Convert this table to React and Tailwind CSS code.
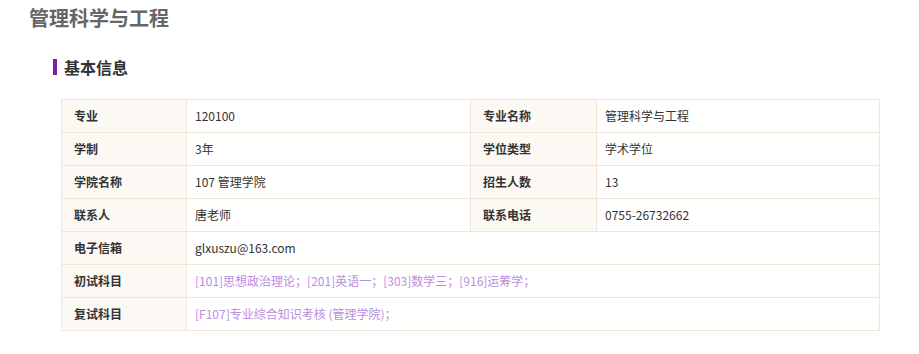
export default function App() {
  const font = { fontFamily: '"Noto Sans CJK SC", "Noto Sans", sans-serif' };
  const label = "border border-[#f3e5d6] bg-[#fcf9f5] pl-3 pr-2 h-[33px] text-[12px] font-bold text-[#333] align-middle";
  const value = "border border-[#f3e5d6] bg-white pl-2 pr-2 h-[33px] text-[12px] text-[#333] align-middle";
  const link = "text-[#bb8ddf]";
  return (
    <div className="w-[919px] h-[354px] bg-white overflow-hidden" style={font}>
      <div className="pl-[29px] pt-[4px] h-[28px] text-[20px] leading-[28px] font-bold text-[#666]">管理科学与工程</div>
      <div className="mt-[31px] ml-[53px] flex items-center h-[16px]">
        <div className="w-[4px] h-[16px] bg-[#7b1fa2]"></div>
        <div className="ml-[7px] text-[16px] leading-[16px] font-bold text-[#333]">基本信息</div>
      </div>
      <table className="ml-[61px] mt-[24px] border-collapse w-[818px] table-fixed">
        <colgroup>
          <col className="w-[125px]" />
          <col className="w-[284px]" />
          <col className="w-[126px]" />
          <col className="w-[283px]" />
        </colgroup>
        <tbody>
          <tr>
            <td className={label}>专业</td>
            <td className={value}>120100</td>
            <td className={label}>专业名称</td>
            <td className={value}>管理科学与工程</td>
          </tr>
          <tr>
            <td className={label}>学制</td>
            <td className={value}>3年</td>
            <td className={label}>学位类型</td>
            <td className={value}>学术学位</td>
          </tr>
          <tr>
            <td className={label}>学院名称</td>
            <td className={value}>107 管理学院</td>
            <td className={label}>招生人数</td>
            <td className={value}>13</td>
          </tr>
          <tr>
            <td className={label}>联系人</td>
            <td className={value}>唐老师</td>
            <td className={label}>联系电话</td>
            <td className={value}>0755-26732662</td>
          </tr>
          <tr>
            <td className={label}>电子信箱</td>
            <td className={value} colSpan={3}>glxuszu@163.com</td>
          </tr>
          <tr>
            <td className={label}>初试科目</td>
            <td className={value} colSpan={3}>
              <span className={link}>[101]思想政治理论；[201]英语一；[303]数学三；[916]运筹学；</span>
            </td>
          </tr>
          <tr>
            <td className={label}>复试科目</td>
            <td className={value} colSpan={3}>
              <span className={link}>[F107]专业综合知识考核 (管理学院)；</span>
            </td>
          </tr>
        </tbody>
      </table>
    </div>
  );
}
